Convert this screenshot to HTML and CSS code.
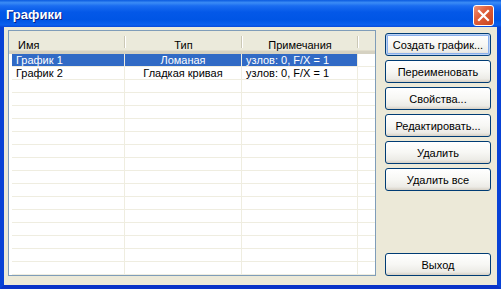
FILE: index.html
```html
<!DOCTYPE html>
<html>
<head>
<meta charset="utf-8">
<link rel="stylesheet" href="styles.css">
</head>
<body>
<div class="window">
  <div class="titlebar">
    <span class="title">Графики</span>
    <span class="close"><svg width="13" height="13" viewBox="0 0 13 13"><path d="M2 2 L11 11 M11 2 L2 11" stroke="#fff" stroke-width="2.2" stroke-linecap="square"/></svg></span>
  </div>
  <div class="client">
    <div class="list">
      <div class="head">
        <div class="hc hc-left">Имя</div>
        <div class="hc">Тип</div>
        <div class="hc">Примечания</div>
        <div class="hc hc-fill"></div>
      </div>
      <div class="rows">
        <div class="row sel"><div class="c c1">График 1</div><div class="c c2">Ломаная</div><div class="c c3">узлов: 0, F/X = 1</div><div class="c c4"></div></div>
        <div class="row"><div class="c c1">График 2</div><div class="c c2">Гладкая кривая</div><div class="c c3">узлов: 0, F/X = 1</div><div class="c c4"></div></div>
        <div class="row"><div class="c c1"></div><div class="c c2"></div><div class="c c3"></div><div class="c c4"></div></div>
        <div class="row"><div class="c c1"></div><div class="c c2"></div><div class="c c3"></div><div class="c c4"></div></div>
        <div class="row"><div class="c c1"></div><div class="c c2"></div><div class="c c3"></div><div class="c c4"></div></div>
        <div class="row"><div class="c c1"></div><div class="c c2"></div><div class="c c3"></div><div class="c c4"></div></div>
        <div class="row"><div class="c c1"></div><div class="c c2"></div><div class="c c3"></div><div class="c c4"></div></div>
        <div class="row"><div class="c c1"></div><div class="c c2"></div><div class="c c3"></div><div class="c c4"></div></div>
        <div class="row"><div class="c c1"></div><div class="c c2"></div><div class="c c3"></div><div class="c c4"></div></div>
        <div class="row"><div class="c c1"></div><div class="c c2"></div><div class="c c3"></div><div class="c c4"></div></div>
        <div class="row"><div class="c c1"></div><div class="c c2"></div><div class="c c3"></div><div class="c c4"></div></div>
        <div class="row"><div class="c c1"></div><div class="c c2"></div><div class="c c3"></div><div class="c c4"></div></div>
        <div class="row"><div class="c c1"></div><div class="c c2"></div><div class="c c3"></div><div class="c c4"></div></div>
        <div class="row"><div class="c c1"></div><div class="c c2"></div><div class="c c3"></div><div class="c c4"></div></div>
        <div class="row"><div class="c c1"></div><div class="c c2"></div><div class="c c3"></div><div class="c c4"></div></div>
        <div class="row"><div class="c c1"></div><div class="c c2"></div><div class="c c3"></div><div class="c c4"></div></div>
        <div class="row"><div class="c c1"></div><div class="c c2"></div><div class="c c3"></div><div class="c c4"></div></div>
      </div>
    </div>
    <div class="buttons">
      <button class="btn default">Создать график...</button>
      <button class="btn">Переименовать</button>
      <button class="btn">Свойства...</button>
      <button class="btn">Редактировать...</button>
      <button class="btn">Удалить</button>
      <button class="btn">Удалить все</button>
      <button class="btn exit">Выход</button>
    </div>
  </div>
</div>
</body>
</html>
```

FILE: styles.css
```css
html, body {
  margin: 0;
  padding: 0;
  background: #ffffff;
}
body {
  font-family: "Liberation Sans", Arial, sans-serif;
  font-size: 11px;
  color: #000;
}
.window {
  width: 501px;
  height: 289px;
  box-sizing: border-box;
  display: flex;
  flex-direction: column;
  background: #0831d9;
  border-left: 4px solid #0842d6;
  border-right: 4px solid #0842d6;
  border-bottom: 4px solid #0a33c8;
}
.titlebar {
  height: 27px;
  margin: 0 -4px;
  padding: 0 7px 0 6px;
  display: flex;
  align-items: center;
  justify-content: space-between;
  background: linear-gradient(to bottom, #0a5ae0 0%, #3b8cf5 10%, #1a6cf0 22%, #0458e8 45%, #0055e5 75%, #0a5fee 92%, #0848d8 100%);
}
.title {
  color: #fff;
  font-weight: bold;
  font-size: 13px;
  text-shadow: 1px 1px 0 #0a1e80;
  padding-top: 2px;
}
.close {
  width: 19px;
  height: 19px;
  border: 1px solid #fff;
  border-radius: 3px;
  display: flex;
  align-items: center;
  justify-content: center;
  background: linear-gradient(135deg, #f0947a 0%, #e0603c 40%, #c8421c 100%);
  margin-top: 3px;
}
.client {
  flex: 1;
  background: #ece9d8;
  display: flex;
  padding: 3px 6px 9px 4px;
  gap: 9px;
}
.list {
  width: 368px;
  box-sizing: border-box;
  border: 1px solid #7f9db9;
  background: #fff;
  display: flex;
  flex-direction: column;
  overflow: hidden;
}
.head {
  display: grid;
  grid-template-columns: 116px 117px 116px 1fr;
  height: 23px;
  flex: none;
  box-sizing: border-box;
  background: #ebeadb;
  border-bottom: 3px solid #d6d2c2;
  box-shadow: inset 0 -1px 0 #e2decd;
}
.hc {
  text-align: center;
  padding-top: 8px;
  position: relative;
}
.hc::after {
  content: "";
  position: absolute;
  right: 0;
  top: 5px;
  bottom: 3px;
  width: 1px;
  background: #cbc8b6;
  box-shadow: 1px 0 0 #fff;
}
.hc-left {
  text-align: left;
  padding-left: 9px;
}
.hc-fill::after {
  display: none;
}
.rows {
  padding-left: 3px;
}
.row {
  display: grid;
  grid-template-columns: 113px 117px 116px 1fr;
  height: 13px;
}
.c {
  box-sizing: border-box;
  border-right: 1px solid #efede0;
  border-bottom: 1px solid #efede0;
  line-height: 13px;
  white-space: nowrap;
  overflow: hidden;
}
.c1 {
  padding-left: 4px;
}
.c2 {
  text-align: center;
}
.c3 {
  padding-left: 4px;
}
.c4 {
  border-right: none;
}
.sel .c1, .sel .c2, .sel .c3 {
  background: #316ac5;
  color: #fff;
}
.buttons {
  flex: 1;
  display: flex;
  flex-direction: column;
  gap: 4px;
  padding-top: 3px;
}
.btn {
  width: 106px;
  height: 23px;
  font-family: "Liberation Sans", Arial, sans-serif;
  font-size: 11px;
  color: #000;
  border: 1px solid #003c74;
  border-radius: 3px;
  background: linear-gradient(to bottom, #ffffff 0%, #f7f7f4 50%, #ecebe6 85%, #d6d0c5 100%);
  padding: 0;
}
.btn.default {
  box-shadow: inset 0 0 0 1px #bcd2f3, inset 0 0 0 2px #8ab0ec;
}
.exit {
  margin-top: auto;
}
```
